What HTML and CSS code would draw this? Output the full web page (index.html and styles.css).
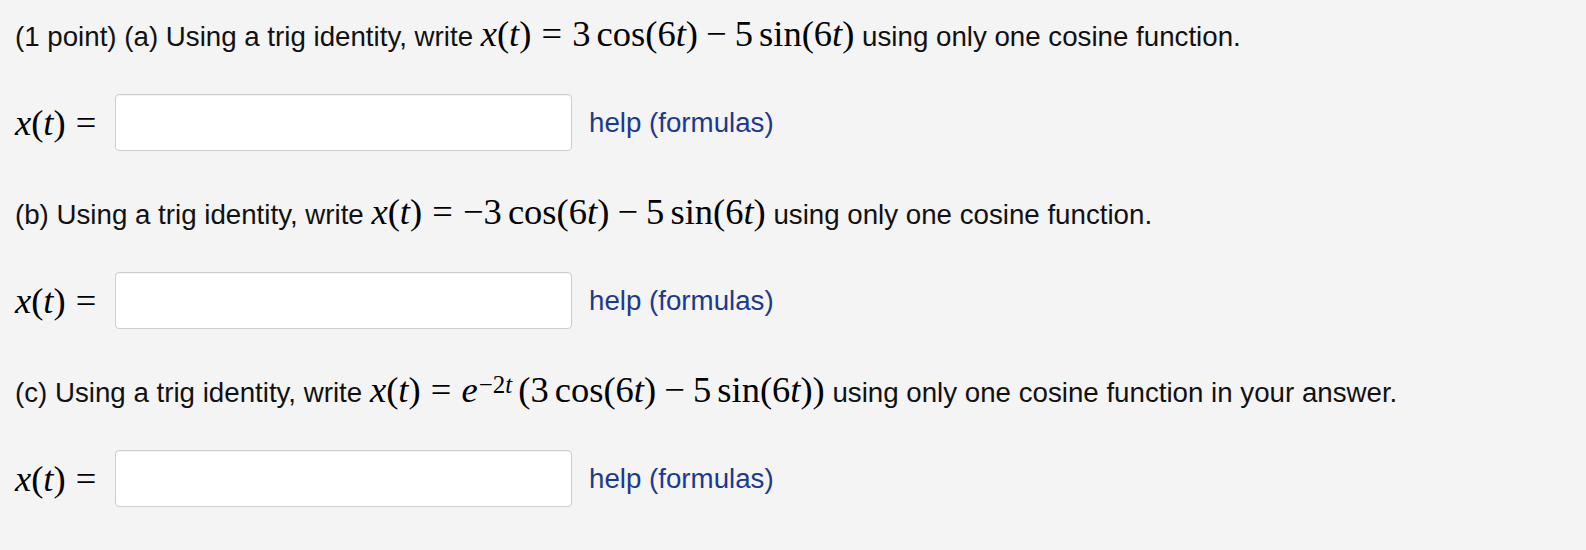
FILE: index.html
```html
<!DOCTYPE html>
<html>
<head>
<meta charset="utf-8">
<link rel="stylesheet" href="styles.css">
</head>
<body>
<div class="problem">
  <p class="q">(1 point) (a) Using a trig identity, write <span class="m"><i>x</i>(<i>t</i>)<span class="rel">=</span>3<span class="th"></span>cos(6<i>t</i>)<span class="bin">−</span>5<span class="th"></span>sin(6<i>t</i>)</span> using only one cosine function.</p>
  <div class="ans"><span class="m lbl"><i>x</i>(<i>t</i>)<span class="rel">=</span></span><span class="box"></span><a class="help">help (formulas)</a></div>
  <p class="q">(b) Using a trig identity, write <span class="m"><i>x</i>(<i>t</i>)<span class="rel">=</span>−3<span class="th"></span>cos(6<i>t</i>)<span class="bin">−</span>5<span class="th"></span>sin(6<i>t</i>)</span> using only one cosine function.</p>
  <div class="ans"><span class="m lbl"><i>x</i>(<i>t</i>)<span class="rel">=</span></span><span class="box"></span><a class="help">help (formulas)</a></div>
  <p class="q">(c) Using a trig identity, write <span class="m"><i>x</i>(<i>t</i>)<span class="rel">=</span><i>e</i><sup>−2<i>t</i></sup><span class="th"></span>(3<span class="th"></span>cos(6<i>t</i>)<span class="bin">−</span>5<span class="th"></span>sin(6<i>t</i>))</span> using only one cosine function in your answer.</p>
  <div class="ans"><span class="m lbl"><i>x</i>(<i>t</i>)<span class="rel">=</span></span><span class="box"></span><a class="help">help (formulas)</a></div>
</div>
</body>
</html>
```
FILE: styles.css
```css
html, body { margin: 0; padding: 0; background: #f4f4f4; }
body { font-family: "Liberation Sans", Arial, sans-serif; font-size: 27.7px; color: #111; }
.problem { padding: 10px 15px 0; display: flex; flex-direction: column; }
.q { margin: 0; height: 48px; line-height: 48px; white-space: nowrap; }
.m { font-family: "Liberation Serif", "Times New Roman", serif; font-size: 36.5px; color: #000; }
.rel { margin: 0 0.2778em; }
.bin { margin: 0 0.2222em; }
.th { display: inline-block; width: 0.1667em; }
.m sup { font-size: 25px; line-height: 0; position: relative; top: -9px; vertical-align: baseline; margin-left: 1px; }
.ans { display: flex; align-items: center; height: 57px; margin: 36px 0 37px; }
.lbl { width: 100px; flex: none; }
.lbl .rel { margin-right: 0; }
.box { width: 457px; height: 57px; background: #fff; border: 1px solid #cdcdcd; border-radius: 4px; box-sizing: border-box; box-shadow: inset 0 1px 1px rgba(0,0,0,0.05); flex: none; }
.help { color: #1c3a8c; margin-left: 17px; text-decoration: none; }
```
